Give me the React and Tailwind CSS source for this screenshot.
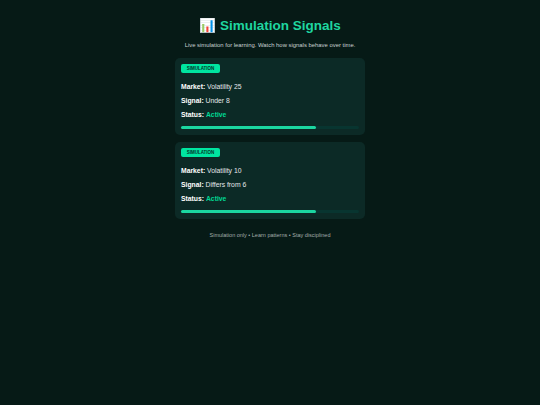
const signals = [
  { market: "Volatility 25", signal: "Under 8" },
  { market: "Volatility 10", signal: "Differs from 6" },
];

function SignalCard({ market, signal }) {
  return (
    <div className="rounded-[5px] bg-[#0c2a26] px-[6px] pt-[6px] h-[77px] flex flex-col items-start">
      <span className="rounded-[2px] bg-[#00e5a0] pt-[1px] h-[9px] w-[39px] flex items-center justify-center text-[4.5px] font-bold text-[#04332a]">
        SIMULATION
      </span>
      <p className="mt-[10px] text-[6.8px] leading-[8px] text-[#e5e7eb]">
        <b className="text-white">Market:</b> {market}
      </p>
      <p className="mt-[6px] text-[6.8px] leading-[8px] text-[#e5e7eb]">
        <b className="text-white">Signal:</b> {signal}
      </p>
      <p className="mt-[6px] text-[6.8px] leading-[8px] text-[#e5e7eb]">
        <b className="text-white">Status:</b> <b className="text-[#00d994]">Active</b>
      </p>
      <div className="mt-[7px] h-[3px] w-full rounded-full bg-[#083530]">
        <div className="h-full w-[135px] rounded-full bg-[#1bd6a0]"></div>
      </div>
    </div>
  );
}

export default function App() {
  return (
    <div className="min-h-[405px] bg-[#061a16] antialiased font-['Liberation_Sans',Arial,sans-serif] flex flex-col items-center">
      <h1 className="mt-[16px] text-[13.5px] leading-[20px] font-bold text-[#1fd6a0]">📊 Simulation Signals</h1>
      <p className="mt-[5px] text-[5.9px] leading-[8px] text-[#c9d1d1]">
        Live simulation for learning. Watch how signals behave over time.
      </p>
      <div className="mt-[9px] w-[190px] flex flex-col gap-[7px]">
        {signals.map((s) => (
          <SignalCard key={s.market} market={s.market} signal={s.signal} />
        ))}
      </div>
      <p className="mt-[12px] text-[5.5px] leading-[8px] text-[#a3adab]">
        Simulation only • Learn patterns • Stay disciplined
      </p>
    </div>
  );
}
